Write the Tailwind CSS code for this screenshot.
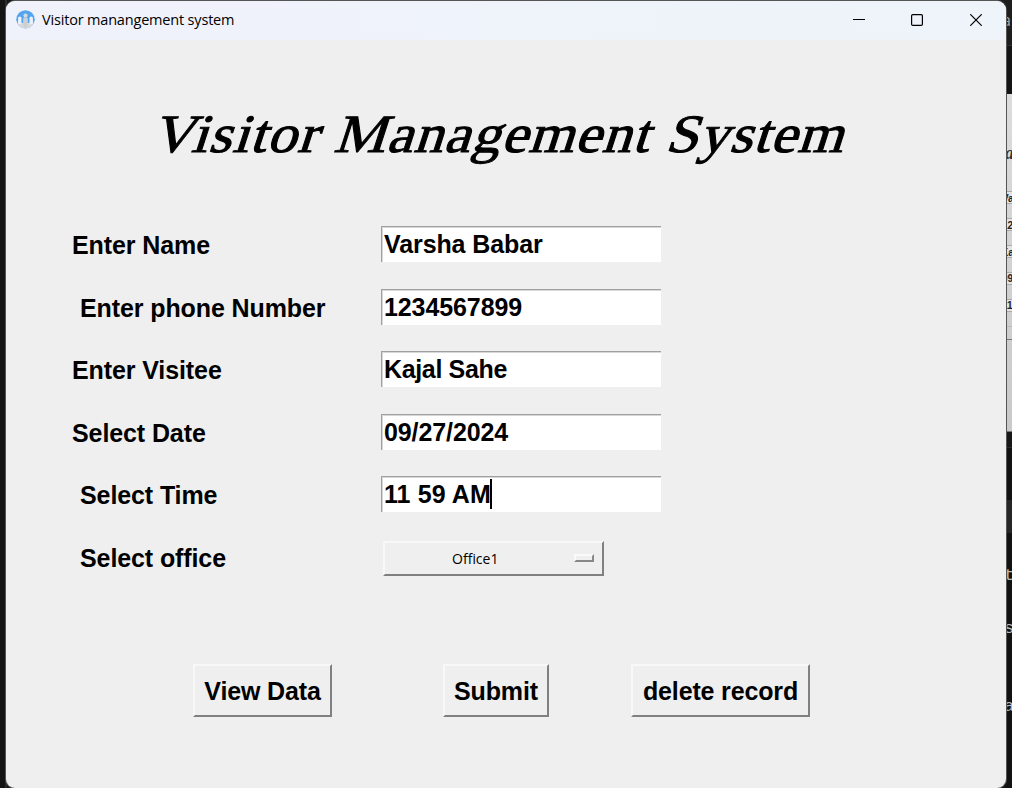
<!DOCTYPE html>
<html lang="en">
<head>
<meta charset="utf-8">
<title>Visitor manangement system</title>
<script src="https://cdn.jsdelivr.net/npm/@tailwindcss/browser@4"></script>
</head>
<body class="relative h-[788px] w-[1012px] overflow-hidden bg-[#161616] text-black font-['Liberation_Sans',Arial,sans-serif]">

<!-- Windows behind the main one -->
<div class="absolute right-0 top-0 flex h-full w-[32px] flex-col overflow-hidden bg-[#111313]">
  <div class="h-[46px] border-b border-[#303030] bg-[#1e1e1e]"></div>
  <div class="h-[48px] bg-[#151515]"></div>
  <div class="flex h-[338px] flex-col border-b border-[#777] bg-linear-to-b from-[#dcdcdc] to-[#c9c9c9]">
    <div class="h-[97px]"></div>
    <div class="h-[13px] border-y border-[#aaa] bg-[#e4e4e4]"></div>
    <div class="mt-[14px] h-[13px] border-y border-[#aaa] bg-[#e4e4e4]"></div>
    <div class="mt-[14px] h-[13px] border-y border-[#aaa] bg-[#e4e4e4]"></div>
    <div class="mt-[14px] h-[13px] border-y border-[#aaa] bg-[#e4e4e4]"></div>
    <div class="mt-[14px] h-[13px] border-y border-[#aaa] bg-[#e4e4e4]"></div>
    <div class="mt-[14px] h-[14px] border-y border-b-[#777] border-t-[#bbb]"></div>
  </div>
  <div class="h-[16px] border-b border-[#2b2b2b] bg-[#171919]"></div>
  <div class="h-[52px]"></div>
  <div class="h-[33px] bg-[#252626]"></div>
</div>
<span class="absolute left-[1002px] top-[10px] text-[16px] leading-[20px] text-[#aaa] font-['Open_Sans',sans-serif]">an</span>
<span class="absolute left-[1005px] top-[143px] text-[18px] font-bold italic leading-[20px] text-[#333] font-['Liberation_Serif',serif]">a</span>
<span class="absolute left-[1002px] top-[193px] text-[10px] font-bold leading-[12px] text-[#222]">Va</span>
<span class="absolute left-[1002px] top-[220px] text-[10px] font-bold leading-[12px] text-[#222]">12</span>
<span class="absolute left-[1001px] top-[247px] text-[10px] font-bold leading-[12px] text-[#222]">Ka</span>
<span class="absolute left-[1002px] top-[273px] text-[10px] font-bold leading-[12px] text-[#222]">09</span>
<span class="absolute left-[1002px] top-[300px] text-[10px] font-bold leading-[12px] text-[#222]">11</span>
<span class="absolute left-[1004px] top-[566px] text-[17px] leading-[20px] text-[#bbb] font-['Liberation_Mono',monospace]">t</span>
<span class="absolute left-[1004px] top-[619px] text-[17px] leading-[20px] text-[#bbb] font-['Liberation_Mono',monospace]">s</span>
<span class="absolute left-[1004px] top-[697px] text-[17px] leading-[20px] text-[#bbb] font-['Liberation_Mono',monospace]">a</span>
<div class="absolute left-0 top-0 h-full w-[7px] border-r-2 border-[#2b2b2b] bg-[#141414]"></div>

<!-- Application window -->
<main class="absolute left-[6px] top-[1px] flex h-[787px] w-[1000px] flex-col overflow-hidden rounded-[9px] bg-[#efefef] shadow-[0_0_0_1px_#555]">
  <header class="flex h-[38px] shrink-0 items-center bg-linear-to-r from-[#f0f2fb] to-[#eef4f9] pl-[10px]">
    <svg class="-mt-px size-[19px] shrink-0" viewBox="0 0 19 19">
      <defs><clipPath id="disc"><circle cx="9.5" cy="9.3" r="9.1"/></clipPath></defs>
      <g clip-path="url(#disc)">
        <rect width="19" height="19" fill="#54a5ef"/>
        <path d="M0 19V12.5h19V19z" fill="#d8dadc"/>
        <g fill="#e8f2fa">
          <circle cx="3.8" cy="8.2" r="1.7"/><rect x="2" y="9" width="3.6" height="5" rx="1"/>
          <circle cx="15.2" cy="8.2" r="1.7"/><rect x="13.4" y="9" width="3.6" height="5" rx="1"/>
        </g>
        <path d="M0 9h1.5v4H0zM5.8 9h1.4v4H5.8zM11.8 9h1.4v4h-1.4zM17.5 9H19v4h-1.5z" fill="#54a5ef"/>
        <circle cx="9.5" cy="5.6" r="2.1" fill="#d9dadb"/>
        <rect x="7.2" y="7.4" width="4.6" height="10" rx="1.3" fill="#cdcfd2"/>
      </g>
    </svg>
    <span class="ml-[7px] whitespace-nowrap text-[14.5px] leading-[20px] tracking-[-0.18px] font-['Open_Sans','Noto_Sans',sans-serif]">Visitor manangement system</span>
    <div class="ml-auto flex items-center gap-[46px] pr-[24px]">
      <svg class="size-[12px]" viewBox="0 0 12 12"><path d="M0 5.5h12" stroke="#000" stroke-width="1.1"/></svg>
      <svg class="size-[12px]" viewBox="0 0 12 12"><rect x=".6" y=".6" width="10.8" height="10.8" rx="1.2" fill="none" stroke="#000" stroke-width="1.2"/></svg>
      <svg class="ml-px size-[12px]" viewBox="0 0 12 12"><path d="M.3.3l11.4 11.4M11.7.3L.3 11.7" stroke="#000" stroke-width="1.2"/></svg>
    </div>
  </header>
  <div class="h-px shrink-0 bg-[#eff2f8]"></div>

  <h1 class="ml-[145px] mt-[64px] h-[60px] w-[620px] origin-[0_47px] whitespace-nowrap text-[54px] leading-[60px] tracking-[1px] font-['Liberation_Serif',serif] [-webkit-text-stroke:1px_black] [transform:skewX(-18deg)_scaleX(1.083)]">Visitor Management System</h1>

  <section class="mt-[62px] grid auto-rows-[62.5px] grid-cols-[309px_280px] pl-[66px] text-[25px] font-bold leading-[36px] tracking-[-0.1px]">
    <label class="pt-px">Enter Name</label>
    <div class="h-[36px] border-l border-t border-[#a0a0a0] bg-white pl-[2px] leading-[34px] shadow-[inset_1px_1px_0_#d8d8d8]">Varsha Babar</div>
    <label class="pl-[8px] pt-px">Enter phone Number</label>
    <div class="h-[36px] border-l border-t border-[#a0a0a0] bg-white pl-[2px] leading-[34px] shadow-[inset_1px_1px_0_#d8d8d8]">1234567899</div>
    <label class="pt-px">Enter Visitee</label>
    <div class="h-[36px] border-l border-t border-[#a0a0a0] bg-white pl-[2px] leading-[34px] tracking-[-0.35px] shadow-[inset_1px_1px_0_#d8d8d8]">Kajal Sahe</div>
    <label class="pt-px">Select Date</label>
    <div class="h-[36px] border-l border-t border-[#a0a0a0] bg-white pl-[2px] leading-[34px] shadow-[inset_1px_1px_0_#d8d8d8]">09/27/2024</div>
    <label class="pl-[8px] pt-px">Select Time</label>
    <div class="flex h-[36px] border-l border-t border-[#a0a0a0] bg-white pl-[2px] leading-[34px] tracking-[0.1px] shadow-[inset_1px_1px_0_#d8d8d8]">11 59 AM<span class="-ml-px mt-[2px] h-[30px] w-[2.5px] bg-black"></span></div>
    <label class="pl-[8px] pt-px">Select office</label>
    <div class="ml-[2px] mt-[2px] flex h-[35px] w-[221px] items-center border-2 border-b-[#808080] border-l-[#f8f8f8] border-r-[#808080] border-t-[#f8f8f8] pl-[67px] pr-[8px] font-['Open_Sans','Noto_Sans',sans-serif] text-[14px] font-normal tracking-normal">
      <span class="pt-px">Office1</span>
      <span class="ml-auto h-[8px] w-[20px] border-2 border-b-[#888] border-l-[#fafafa] border-r-[#888] border-t-[#fafafa]"></span>
    </div>
  </section>

  <div class="mt-[63px] flex pl-[187px] text-[25px] font-bold leading-[48px] tracking-[-0.15px]">
    <button class="h-[53px] w-[139px] whitespace-nowrap border-2 border-b-[#808080] border-l-[#f8f8f8] border-r-[#808080] border-t-[#f8f8f8]">View Data</button>
    <button class="ml-[111px] h-[53px] w-[106px] whitespace-nowrap border-2 border-b-[#808080] border-l-[#f8f8f8] border-r-[#808080] border-t-[#f8f8f8]">Submit</button>
    <button class="ml-[82px] h-[53px] w-[179px] whitespace-nowrap border-2 border-b-[#808080] border-l-[#f8f8f8] border-r-[#808080] border-t-[#f8f8f8]">delete record</button>
  </div>
</main>
</body>
</html>
